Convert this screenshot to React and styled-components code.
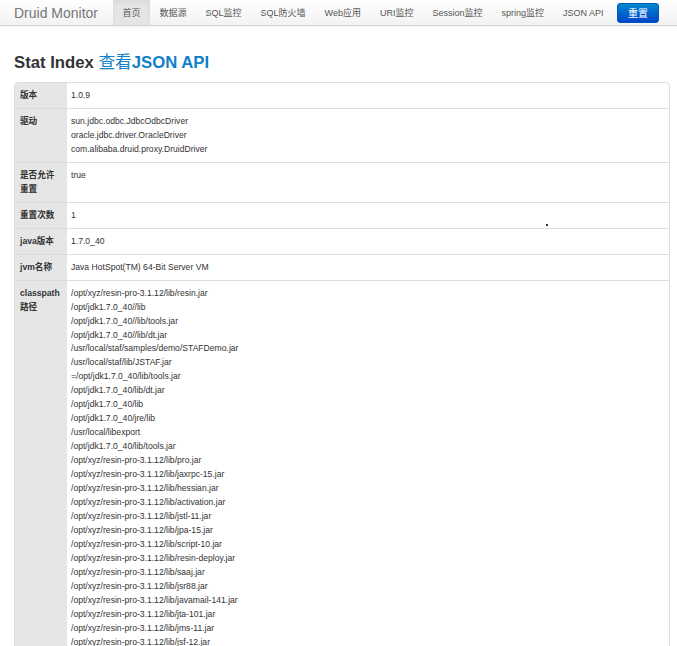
import React from 'react';
import styled, { createGlobalStyle } from 'styled-components';

const GlobalStyle = createGlobalStyle`
  body {
    margin: 0;
    background: #fff;
    font-family: "Liberation Sans", Arial, "Noto Sans CJK SC", sans-serif;
    color: #333;
  }
`;

const NavBar = styled.div`
  height: 25px;
  display: flex;
  align-items: stretch;
  padding-left: 14px;
  background: linear-gradient(to bottom, #ffffff, #f2f2f2);
  border-bottom: 1px solid #d4d4d4;
  box-shadow: 0 1px 3px rgba(0, 0, 0, 0.07);
`;

const Brand = styled.div`
  font-size: 14px;
  color: #777;
  display: flex;
  align-items: center;
  margin-right: 15px;
`;

const NavItem = styled.div`
  font-size: 9px;
  color: #555;
  display: flex;
  align-items: center;
  padding: 0 9.5px;
  background: ${(p) => (p.$active ? '#e5e5e5' : 'transparent')};
  box-shadow: ${(p) => (p.$active ? 'inset 0 2px 5px rgba(0,0,0,0.06)' : 'none')};
`;

const ResetButton = styled.button`
  align-self: center;
  margin-left: 4px;
  width: 42px;
  height: 20px;
  border: 1px solid #0055b8;
  border-radius: 3px;
  background: linear-gradient(to bottom, #0088cc, #0044cc);
  color: #fff;
  font-family: "Noto Sans CJK SC", sans-serif;
  font-size: 10px;
  padding: 0;
`;

const Container = styled.div`
  padding: 0 7px 0 14px;
`;

const Title = styled.h3`
  margin: 24px 0 8px;
  font-size: 16.7px;
  line-height: 22px;
  font-weight: bold;
  color: #333;
`;

const TitleLink = styled.span`
  color: #1180c8;
`;

const CjkLight = styled.span`
  font-weight: normal;
  font-family: "Noto Sans CJK SC", sans-serif;
`;

const Table = styled.div`
  border: 1px solid #ddd;
  border-radius: 4px;
  overflow: hidden;
`;

const Row = styled.div`
  display: grid;
  grid-template-columns: 52px 1fr;
  border-top: ${(p) => (p.$first ? 'none' : '1px solid #ddd')};
  min-height: ${(p) => p.$minH || 0}px;
`;

const Label = styled.div`
  background: #e6e6e6;
  padding: 6px 7px 5px 5px;
  font-size: 8.6px;
  line-height: 13.95px;
  font-weight: bold;
  color: #333;
`;

const Value = styled.div`
  padding: 6px 5px 5px 4px;
  font-size: 8.6px;
  line-height: 13.95px;
  color: #333;
`;

const Dot = styled.div`
  position: absolute;
  left: 546px;
  top: 224px;
  width: 2px;
  height: 2px;
  background: #333;
`;

const navItems = ['首页', '数据源', 'SQL监控', 'SQL防火墙', 'Web应用', 'URI监控', 'Session监控', 'spring监控', 'JSON API'];

const resin = '/opt/xyz/resin-pro-3.1.12/lib/';
const classpath = [
  resin + 'resin.jar',
  '/opt/jdk1.7.0_40//lib',
  '/opt/jdk1.7.0_40//lib/tools.jar',
  '/opt/jdk1.7.0_40//lib/dt.jar',
  '/usr/local/staf/samples/demo/STAFDemo.jar',
  '/usr/local/staf/lib/JSTAF.jar',
  '=/opt/jdk1.7.0_40/lib/tools.jar',
  '/opt/jdk1.7.0_40/lib/dt.jar',
  '/opt/jdk1.7.0_40/lib',
  '/opt/jdk1.7.0_40/jre/lib',
  '/usr/local/libexport',
  '/opt/jdk1.7.0_40/lib/tools.jar',
  resin + 'pro.jar',
  resin + 'jaxrpc-15.jar',
  resin + 'hessian.jar',
  resin + 'activation.jar',
  resin + 'jstl-11.jar',
  resin + 'jpa-15.jar',
  resin + 'script-10.jar',
  resin + 'resin-deploy.jar',
  resin + 'saaj.jar',
  resin + 'jsr88.jar',
  resin + 'javamail-141.jar',
  resin + 'jta-101.jar',
  resin + 'jms-11.jar',
  resin + 'jsf-12.jar',
];

const rows = [
  { label: '版本', lines: ['1.0.9'] },
  { label: '驱动', lines: ['sun.jdbc.odbc.JdbcOdbcDriver', 'oracle.jdbc.driver.OracleDriver', 'com.alibaba.druid.proxy.DruidDriver'] },
  { label: '是否允许重置', lines: ['true'], minH: 39 },
  { label: '重置次数', lines: ['1'] },
  { label: 'java版本', lines: ['1.7.0_40'] },
  { label: 'jvm名称', lines: ['Java HotSpot(TM) 64-Bit Server VM'] },
  { label: 'classpath 路径', lines: classpath },
];

const App = () => {
  return (
    <>
      <GlobalStyle />
      <NavBar>
        <Brand>Druid Monitor</Brand>
        {navItems.map((item, i) => (
          <NavItem key={item} $active={i === 0}>{item}</NavItem>
        ))}
        <ResetButton>重置</ResetButton>
      </NavBar>
      <Container>
        <Title>
          Stat Index <TitleLink><CjkLight>查看</CjkLight>JSON API</TitleLink>
        </Title>
        <Table>
          {rows.map((row, i) => (
            <Row key={row.label} $first={i === 0} $minH={row.minH}>
              <Label>{row.label}</Label>
              <Value>
                {row.lines.map((line, j) => (
                  <div key={j}>{line}</div>
                ))}
              </Value>
            </Row>
          ))}
        </Table>
      </Container>
      <Dot />
    </>
  );
};

export default App;
